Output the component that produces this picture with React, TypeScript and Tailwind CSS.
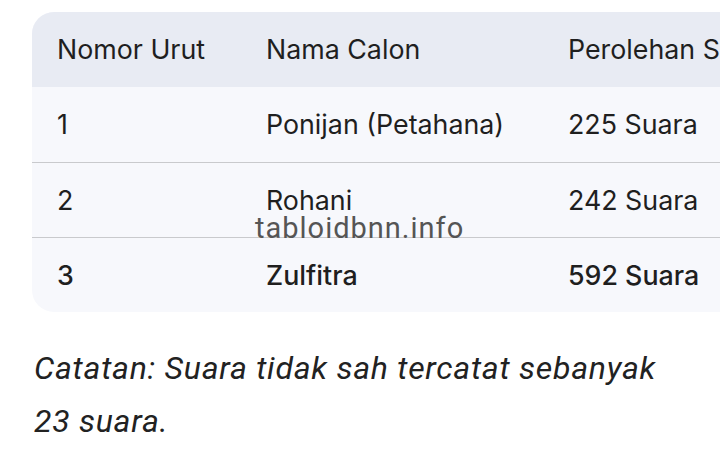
const rows = [
  { no: "1", name: "Ponijan (Petahana)", votes: "225 Suara", bold: false },
  { no: "2", name: "Rohani", votes: "242 Suara", bold: false },
  { no: "3", name: "Zulfitra", votes: "592 Suara", bold: true },
];

export default function App() {
  return (
    <div
      className="relative w-[720px] h-[453px] overflow-hidden bg-white text-[#1f1f1f]"
      style={{ fontFamily: "Inter, Roboto, sans-serif" }}
    >
      <div className="pt-[12px] pl-[32px]">
        <div className="w-[820px] rounded-l-[22px] overflow-hidden bg-[#f7f8fc]">
          <div className="flex h-[75px] items-center bg-[#e8ebf3] text-[26.8px]">
            <div className="w-[209px] pl-[25px]">Nomor Urut</div>
            <div className="w-[302px] pl-[25px]">Nama Calon</div>
            <div className="flex-1 pl-[25px] whitespace-nowrap">Perolehan Suara</div>
          </div>
          {rows.map((r, i) => (
            <div
              key={r.no}
              className={`flex h-[75px] items-center text-[26.8px] ${
                i > 0 ? "border-t-[1.5px] border-[#c9cacd]" : ""
              } ${r.bold ? "font-medium" : ""}`}
            >
              <div className="w-[209px] pl-[25px]">{r.no}</div>
              <div className="w-[302px] pl-[25px]">{r.name}</div>
              <div className="flex-1 pl-[25px]">{r.votes}</div>
            </div>
          ))}
        </div>
      </div>

      <p
        className="mt-[30px] pl-[34px] text-[32px] leading-[53px] italic text-[#222] tracking-[0.75px] whitespace-nowrap"
        style={{ fontFamily: "Roboto, sans-serif" }}
      >
        Catatan: Suara tidak sah tercatat sebanyak
        <br />
        23 suara.
      </p>

      <div
        className="absolute left-[255px] top-[207px] text-[29px] text-[#555] tracking-[1px]"
        style={{ fontFamily: "Roboto, sans-serif" }}
      >
        tabloidbnn.info
      </div>
    </div>
  );
}
